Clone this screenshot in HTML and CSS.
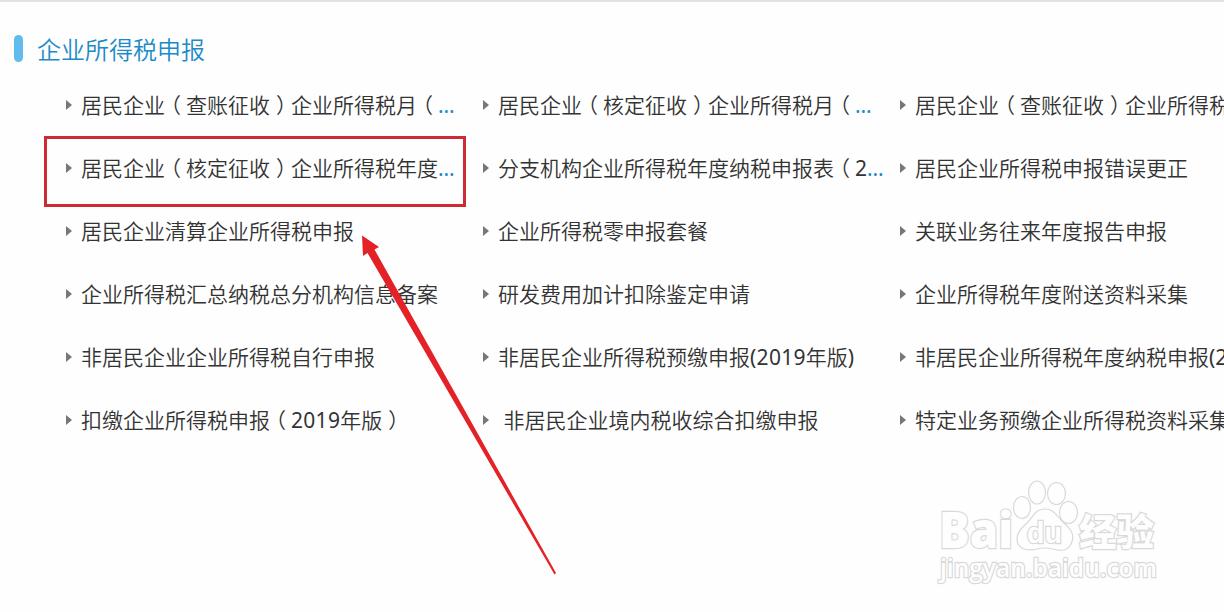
FILE: index.html
```html
<!DOCTYPE html>
<html lang="zh-CN">
<head>
    <meta charset="UTF-8">
    <meta name="viewport" content="width=device-width, initial-scale=1.0">
    <title>企业所得税申报</title>
    <link rel="stylesheet" href="styles.css">
</head>
<body>
    <div class="tax-section">
        <h2 class="section-title">企业所得税申报</h2>

        <ul class="link-list">
            <li><a href="#">居民企业<i class="open">（</i>查账征收<i class="close">）</i>企业所得税月<i class="open">（</i><span class="more">…</span></a></li>
            <li><a href="#">居民企业<i class="open">（</i>核定征收<i class="close">）</i>企业所得税月<i class="open">（</i><span class="more">…</span></a></li>
            <li><a href="#">居民企业<i class="open">（</i>查账征收<i class="close">）</i>企业所得税</a></li>

            <li class="marked"><a href="#">居民企业<i class="open">（</i>核定征收<i class="close">）</i>企业所得税年度<span class="more">…</span></a></li>
            <li><a href="#">分支机构企业所得税年度纳税申报表<i class="open">（</i>2<span class="more">…</span></a></li>
            <li><a href="#">居民企业所得税申报错误更正</a></li>

            <li><a href="#">居民企业清算企业所得税申报</a></li>
            <li><a href="#">企业所得税零申报套餐</a></li>
            <li><a href="#">关联业务往来年度报告申报</a></li>

            <li><a href="#">企业所得税汇总纳税总分机构信息备案</a></li>
            <li><a href="#">研发费用加计扣除鉴定申请</a></li>
            <li><a href="#">企业所得税年度附送资料采集</a></li>

            <li><a href="#">非居民企业企业所得税自行申报</a></li>
            <li><a href="#">非居民企业所得税预缴申报<span class="year">(2019</span>年版)</a></li>
            <li><a href="#">非居民企业所得税年度纳税申报(2</a></li>

            <li><a href="#">扣缴企业所得税申报<i class="open">（</i><span class="year">2019</span>年版<i class="close">）</i></a></li>
            <li><a href="#">&nbsp;非居民企业境内税收综合扣缴申报</a></li>
            <li><a href="#">特定业务预缴企业所得税资料采集</a></li>
        </ul>
    </div>

    <!-- pointer to the highlighted entry -->
    <svg class="arrow" width="200" height="344" viewBox="0 0 200 344">
        <path d="M2 1.500 L19 13 L14.500 15.500 L196 339 L194.500 340.500 L7.500 19 L3 22 Z"/>
    </svg>

    <svg class="watermark" width="230" height="112" viewBox="0 0 230 112">
        <text class="wm-logo" x="4" y="68" textLength="74" lengthAdjust="spacingAndGlyphs">Bai</text>
        <ellipse cx="87" cy="27.500" rx="8.500" ry="11"/>
        <ellipse cx="102" cy="12.500" rx="8.500" ry="11.500"/>
        <ellipse cx="121.500" cy="13.500" rx="9" ry="11"/>
        <ellipse cx="133.500" cy="32.500" rx="9" ry="11"/>
        <path d="M110 29 C120 29 121 36 129 43 C137 50 140 56 136 64 C132 72 125 71 118 69 Q110 67 102 69 C94 71 86 70 83 64 C80 56 84 50 92 43 C99 36 100 29 110 29 Z"/>
        <text class="wm-du" x="92" y="63" textLength="35" lengthAdjust="spacingAndGlyphs">du</text>
        <text class="wm-cn" x="144" y="66" textLength="75" lengthAdjust="spacingAndGlyphs">经验</text>
        <text class="wm-url" x="5" y="97" textLength="217" lengthAdjust="spacingAndGlyphs">jingyan.baidu.com</text>
    </svg>
</body>
</html>
```

FILE: styles.css
```css
* {
    margin: 0;
    padding: 0;
    box-sizing: border-box;
}

body {
    position: relative;
    height: 612px;
    overflow: hidden;
    background: #fefefe;
    border-top: 2px solid #e2e2e2;
    color: #333;
    font-family: "Noto Sans", "Noto Sans CJK SC DemiLight", "Noto Sans CJK SC", sans-serif;
}

.tax-section {
    padding: 33px 0 0 14px;
    overflow: hidden;
}

.section-title {
    display: flex;
    align-items: center;
    gap: 14px;
    height: 30px;
    color: #1c8bc8;
    font-size: 24px;
    font-weight: 400;
    line-height: 30px;
}

.section-title::before {
    content: "";
    align-self: flex-start;
    width: 9px;
    height: 27px;
    border-radius: 4.5px;
    background: #62bbee;
}

.link-list {
    display: grid;
    grid-template-columns: repeat(3, 417px);
    grid-auto-rows: 63px;
    padding: 8px 0 0 32px;
    list-style: none;
}

.link-list li {
    display: flex;
    align-items: center;
    gap: 9px;
    padding-left: 20px;
    white-space: nowrap;
}

.link-list li::before {
    content: "";
    border-left: 6px solid #777;
    border-top: 5px solid transparent;
    border-bottom: 5px solid transparent;
}

.link-list a {
    color: #333;
    font-size: 21px;
    line-height: 30px;
    text-decoration: none;
}

/* brackets sit in the middle of their cell */
.link-list i {
    display: inline-block;
    font-style: normal;
}

.link-list .open {
    transform: translateX(-5px);
}

.link-list .close {
    transform: translateX(6px);
}

.link-list .year {
    letter-spacing: 0.3px;
}

.link-list .more {
    color: #1c8bc8;
    letter-spacing: 0.3px;
}

.link-list .marked {
    position: relative;
}

.link-list .marked::after {
    content: "";
    position: absolute;
    left: -2px;
    top: 0;
    width: 416px;
    height: 65px;
    border: 3px solid #cc2b31;
}

.arrow {
    position: absolute;
    left: 360px;
    top: 232px;
    fill: #e32127;
}

.watermark {
    position: absolute;
    left: 935px;
    top: 478px;
    fill: #fefefe;
    stroke: #d9d9d9;
    stroke-width: 1.2;
}

.watermark text {
    stroke-width: 2.4;
    paint-order: stroke;
}

.wm-logo {
    font: 800 50px "Open Sans", sans-serif;
}

.wm-du {
    font: bold 29px "Liberation Sans", sans-serif;
}

.wm-cn {
    font: 900 37px "Noto Sans CJK SC", sans-serif;
}

.wm-url {
    font: 600 25px "Open Sans", sans-serif;
}
```
